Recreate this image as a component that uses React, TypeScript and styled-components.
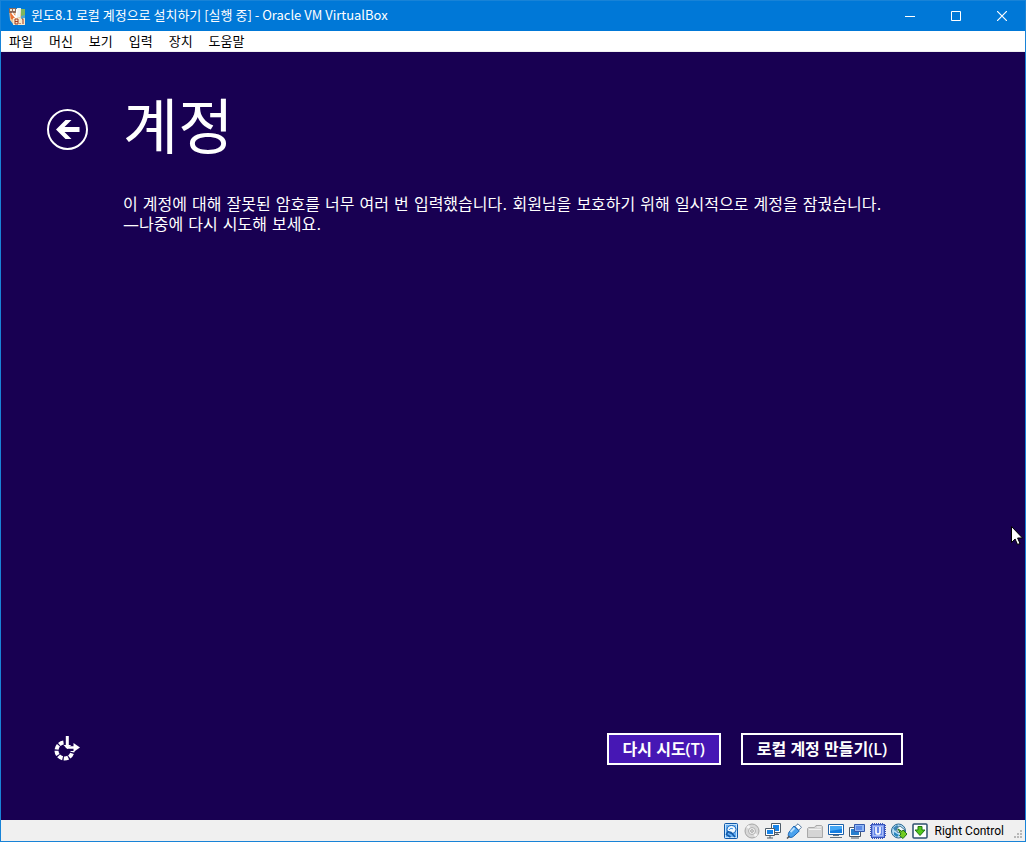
import React from "react";
import styled, { createGlobalStyle } from "styled-components";

const GlobalStyle = createGlobalStyle`
  * { box-sizing: border-box; }
  body { margin: 0; font-family: "Open Sans", "Noto Sans CJK KR", sans-serif; }
  button { font-family: inherit; }
`;

const Window = styled.div`
  position: relative;
  display: flex;
  flex-direction: column;
  min-height: 100vh;
  border: 1px solid #1883d7;
  background: #180052;
`;

const TitleBar = styled.header`
  display: flex;
  align-items: center;
  height: 30px;
  padding-left: 8px;
  background: #0078d7;
  color: #fff;
`;

const WindowTitle = styled.h1`
  flex: 1;
  margin: 0 0 0 5px;
  padding-bottom: 2px;
  font-family: "Noto Sans CJK KR", sans-serif;
  font-size: 13px;
  line-height: 16px;
  font-weight: 400;
  white-space: nowrap;
`;

const CaptionButton = styled.button`
  display: flex;
  align-items: center;
  justify-content: center;
  width: 46px;
  height: 30px;
  padding: 0;
  border: 0;
  background: transparent;
  color: #fff;
`;

const MenuBar = styled.nav`
  display: flex;
  align-items: center;
  height: 21px;
  background: #fff;
  border-bottom: 1px solid #f0f0f0;
`;

const MenuItem = styled.button`
  padding: 0 8px;
  border: 0;
  background: transparent;
  color: #000;
  font-size: 13px;
  line-height: 20px;
  white-space: nowrap;
`;

const Screen = styled.main`
  flex: 1;
  display: flex;
  flex-direction: column;
  padding: 41px 0 50px;
  color: #fff;
`;

const Row = styled.div`
  display: grid;
  grid-template-columns: 122px 1fr 122px;
  align-items: center;
`;

const IconButton = styled.button`
  display: flex;
  align-items: center;
  justify-content: center;
  width: 42px;
  height: 42px;
  margin-left: 45px;
  padding: 0;
  border: 0;
  background: transparent;
  color: #fff;
`;

const PageTitle = styled.h2`
  margin: 0;
  padding-bottom: 12px;
  font-size: 60px;
  line-height: 60px;
  font-weight: 400;
  font-family: "Noto Sans CJK KR", sans-serif;
`;

const Message = styled.p`
  grid-column: 2;
  margin: 30px 0 0;
  font-family: "DejaVu Sans", "Noto Sans CJK KR", sans-serif;
  font-size: 16px;
  line-height: 20px;
`;

const Footer = styled(Row)`
  margin-top: auto;
`;

const Actions = styled.div`
  display: flex;
  justify-content: flex-end;
  gap: 20px;
`;

const ActionButton = styled.button<{ $primary?: boolean }>`
  height: 32px;
  padding: 0 14px;
  border: 2px solid #fff;
  background: ${(p) => (p.$primary ? "#4617b4" : "transparent")};
  color: #fff;
  font-size: 16px;
  line-height: 20px;
  font-weight: 600;
  white-space: nowrap;
`;

const StatusBar = styled.footer`
  display: flex;
  align-items: center;
  justify-content: flex-end;
  gap: 5px;
  height: 21px;
  background: #f0f0f0;
  color: #000;
`;

const HostKey = styled.span`
  font-family: Roboto, sans-serif;
  font-size: 12px;
  line-height: 16px;
  margin: 0 5px 0 2px;
`;

const Grip = styled.svg`
  align-self: flex-end;
`;

const Pointer = styled.svg`
  position: absolute;
  right: 2px;
  top: 62.5%;
`;

const menus = ["파일", "머신", "보기", "입력", "장치", "도움말"];

const AppIcon = () => (
  <svg width="17" height="17" viewBox="0 0 17 17" aria-hidden="true">
    <path d="M0 1h16v4l-1 11H4L1 12z" fill="#e8c9a0" />
    <path d="M0 0h7v5H0z" fill="#8d6a5a" />
    <path d="M1 1h2v2H1zM4 1h2v2H4z" fill="#f1eadc" />
    <path d="M8 0h4l-1 9-4 1z" fill="#e9f3f5" />
    <path d="M12 1h4v8l-4 1z" fill="#7eb65d" />
    <path d="M1 5l5 1v6l-4-1z" fill="#ed7236" />
    <path d="M3 5l4 5M8 1l-1 9" stroke="#fff" strokeWidth="1.500" />
    <path d="M4 10h12v7H4z" fill="#f7e8c8" />
    <path d="M12 8l4-1v3l-4 1z" fill="#4ea6cf" />
    <path d="M6 11h3v5H6zM6 13.500h3M13 11l1 0v5M11 15v1" stroke="#a33a22" fill="none" />
  </svg>
);

const DiskIcon = () => (
  <svg width="16" height="16" viewBox="0 0 16 16">
    <rect x="1.500" y=".5" width="13" height="15" rx="1" fill="#66b0f5" stroke="#1159a8" />
    <rect x="2.500" y="1.500" width="11" height="13" fill="none" stroke="#c4e3fd" />
    <ellipse cx="8.500" cy="6.500" rx="4.500" ry="4" fill="#f0f9ff" stroke="#1762b4" />
    <path d="M6 7c1-2 3-2 4-1" fill="none" stroke="#3c91e6" />
    <path d="M4.500 8.500l3.500 1 4 4.500M4.500 9l-1 2.500 4 2.500" fill="none" stroke="#1159a8" strokeWidth="1.600" />
  </svg>
);

const DiscIcon = () => (
  <svg width="16" height="16" viewBox="0 0 16 16">
    <circle cx="8" cy="8" r="7" fill="#d8d8d8" stroke="#a5a5a5" />
    <path d="M8 8L2 4l3-2zM8 8l6 4-3 2z" fill="#f5f5f5" />
    <circle cx="8" cy="8" r="3.500" fill="#eee" stroke="#b2b2b2" />
    <circle cx="8" cy="8" r="1.300" fill="#fff" stroke="#999" />
  </svg>
);

const NetworkIcon = () => (
  <svg width="16" height="16" viewBox="0 0 16 16">
    <path d="M6.500.5h9v9h-9z" fill="#fff" stroke="#4e5c69" />
    <path d="M8 2h6v6H8z" fill="#1683e8" />
    <path d="M10 11.500h4M12 10v2" stroke="#4e5c69" />
    <path d="M.5 5.500h9v7h-9z" fill="#fff" stroke="#4e5c69" />
    <path d="M2 7h6v4H2z" fill="#1683e8" />
    <path d="M5 13v2M2 15h6" stroke="#4e5c69" />
  </svg>
);

const UsbIcon = () => (
  <svg width="16" height="16" viewBox="0 0 16 16">
    <path d="M9 3.500L12 .8l3.500 3.500-3 3z" fill="#fff" stroke="#51779e" />
    <path d="M8 3l5.300 5-6 5.500c-1.500 1.200-3 1-4.500.5-.8-1.400-.8-3.300.4-5z" fill="#4ba2ed" stroke="#1664b5" />
    <path d="M8.500 5L4.500 9" stroke="#b8e1ff" strokeWidth="2" />
    <path d="M3.500 13L1 15.500" stroke="#555" strokeWidth="1.500" />
  </svg>
);

const FolderIcon = () => (
  <svg width="16" height="16" viewBox="0 0 16 16">
    <path d="M.5 14.500v-9l1-1h6l1.500-2h5.500l1 1v11z" fill="#d5d5d5" stroke="#a9a9a9" />
    <path d="M2 6.500h12M10 4h4" stroke="#f2f2f2" />
  </svg>
);

const DisplayIcon = () => (
  <svg width="16" height="16" viewBox="0 0 16 16">
    <path d="M.5 1.500h15v10H.5z" fill="#fff" stroke="#1c5fa6" />
    <path d="M2 3h12v7H2z" fill="#147de1" />
    <path d="M2 3h12v3L2 8z" fill="#44a7f5" />
    <path d="M2 14.500h12M5 12.500h6" stroke="#617282" />
  </svg>
);

const RecordIcon = () => (
  <svg width="16" height="16" viewBox="0 0 16 16">
    <path d="M.5 4.500h11v9H.5z" fill="#fff" stroke="#4a5665" />
    <path d="M2 6h8v6H2z" fill="#287fce" />
    <path d="M2 15h8" stroke="#4a5665" />
    <path d="M5.500 1.500h10v7h-10z" fill="#91b8f4" stroke="#3458ad" />
    <path d="M7 3h6v4H7z" fill="#5d8be6" />
  </svg>
);

const CpuIcon = () => (
  <svg width="16" height="16" viewBox="0 0 16 16">
    <rect x="1.500" y="1.500" width="13" height="13" fill="#7c99ee" stroke="#3854ba" />
    <path d="M2 .5h12M2 15.500h12M.5 2v12M15.500 2v12" stroke="#3854ba" strokeDasharray="1 1" />
    <rect x="3.500" y="3.500" width="9" height="9" fill="#6385e8" stroke="#a9bdf6" />
    <path d="M6 4v5.500c0 2 4 2 4 0V4" stroke="#fff" strokeWidth="1.600" fill="none" />
  </svg>
);

const MouseIcon = () => (
  <svg width="16" height="16" viewBox="0 0 16 16">
    <circle cx="7.500" cy="8" r="7" fill="#b7dcf4" stroke="#28668f" />
    <path d="M2 5l4-3 3 3-5 3z" fill="#3c87b8" />
    <path d="M3 9l5 3-2 2-3-2z" fill="#2785bd" />
    <path d="M6 5l3-2 5 4-3 3-5-1z" fill="#f1f8fc" stroke="#47758d" />
    <path d="M7 6l4 2.500 1-1.500 4 4-4 4.500-3.500-3L10 11z" fill="#72cc22" stroke="#237316" />
  </svg>
);

const CaptureIcon = () => (
  <svg width="16" height="16" viewBox="0 0 16 16">
    <rect x="1" y="1" width="14" height="14" rx="1" fill="#fff" stroke="#2e506e" strokeWidth="1.500" />
    <path d="M6 3.500h4V7h3l-5 5.500L3 7h3z" fill="#52c91a" stroke="#227612" />
  </svg>
);

const devices = [
  DiskIcon, DiscIcon, NetworkIcon, UsbIcon, FolderIcon,
  DisplayIcon, RecordIcon, CpuIcon, MouseIcon, CaptureIcon,
];

export default function App() {
  return (
    <>
      <GlobalStyle />
      <Window>
        <TitleBar>
          <AppIcon />
          <WindowTitle>윈도8.1 로컬 계정으로 설치하기 [실행 중] - Oracle VM VirtualBox</WindowTitle>
          <CaptionButton aria-label="최소화">
            <svg width="10" height="10"><path d="M0 5.500h10" stroke="currentColor" /></svg>
          </CaptionButton>
          <CaptionButton aria-label="최대화">
            <svg width="10" height="10"><path d="M.5.5h9v9h-9z" fill="none" stroke="currentColor" /></svg>
          </CaptionButton>
          <CaptionButton aria-label="닫기">
            <svg width="10" height="10"><path d="M0 0l10 10M10 0L0 10" stroke="currentColor" strokeWidth="1.200" /></svg>
          </CaptionButton>
        </TitleBar>
        <MenuBar>
          {menus.map((label) => <MenuItem key={label}>{label}</MenuItem>)}
        </MenuBar>
        <Screen>
          <Row>
            <IconButton aria-label="뒤로">
              <svg width="42" height="42" viewBox="0 0 42 42" fill="none">
                <circle cx="21.500" cy="21.500" r="19.500" stroke="currentColor" strokeWidth="2" />
                <path d="M10 21.500l9.500-9.500h6l-7 7h15v5h-15l7 7h-6z" fill="currentColor" />
              </svg>
            </IconButton>
            <PageTitle>계정</PageTitle>
          </Row>
          <Row>
            <Message>
              이 계정에 대해 잘못된 암호를 너무 여러 번 입력했습니다. 회원님을 보호하기 위해 일시적으로 계정을 잠궜습니다.
              <br />
              —나중에 다시 시도해 보세요.
            </Message>
          </Row>
          <Footer>
            <IconButton aria-label="접근성">
              <svg width="28" height="28" viewBox="0 0 28 28" fill="none" stroke="currentColor">
                <path d="M10.500 7.600A8 8 0 1 0 19.500 16" strokeWidth="4" strokeDasharray="4.600 1.200" />
                <path d="M14.300 1v12" strokeWidth="3" />
                <path d="M10.500 10l3.700 4 4-4z" fill="currentColor" stroke="none" />
                <path d="M14 12.500h8" strokeWidth="2.500" />
                <path d="M20.500 8l6.500 4.500-6.500 4.500z" fill="currentColor" stroke="none" />
              </svg>
            </IconButton>
            <Actions>
              <ActionButton $primary>다시 시도(T)</ActionButton>
              <ActionButton>로컬 계정 만들기(L)</ActionButton>
            </Actions>
          </Footer>
        </Screen>
        <StatusBar>
          {devices.map((Device, i) => <Device key={i} />)}
          <HostKey>Right Control</HostKey>
          <Grip width="11" height="11" fill="#b8b8b8" aria-hidden="true">
            <path d="M6 0h2v2H6zM6 3h2v2H6zM3 3h2v2H3zM6 6h2v2H6zM3 6h2v2H3zM0 6h2v2H0z" />
          </Grip>
        </StatusBar>
        <Pointer width="12" height="20" viewBox="0 0 12 20" aria-hidden="true">
          <path d="M.5.5v16l3.600-3.500 2.400 5.500 2.500-1-2.400-5.500H11.500z" fill="#fff" stroke="#000" />
        </Pointer>
      </Window>
    </>
  );
}
